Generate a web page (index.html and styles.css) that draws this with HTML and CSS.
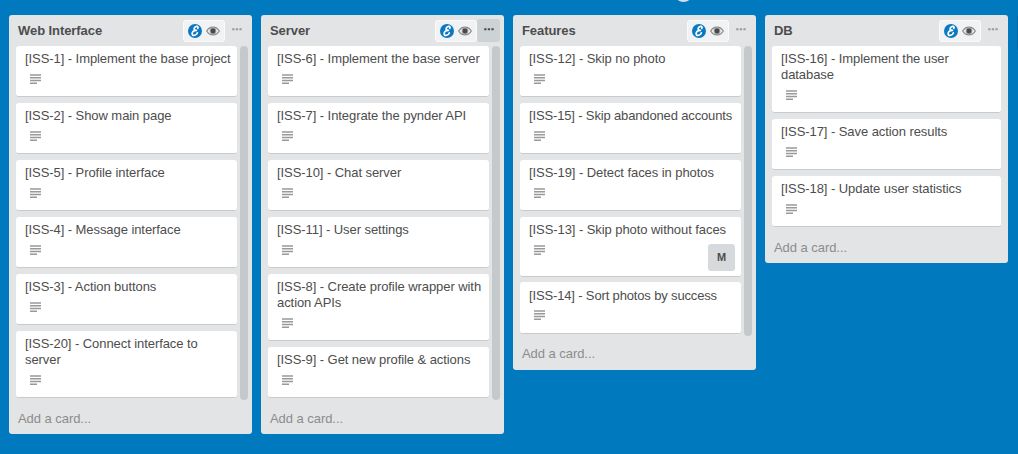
FILE: index.html
```
<!DOCTYPE html>
<html lang="en">
<head>
<meta charset="utf-8">
<title>Board</title>
<link rel="stylesheet" href="styles.css">
</head>
<body>
<svg class="defs" aria-hidden="true">
  <symbol id="logo" viewBox="0 0 14 14"><circle cx="7" cy="7" r="7" fill="#0b79c1"/><path d="M9.8 4.3C10.4 3 9.8 2.3 8.8 2.4C7 2.6 5.7 4.2 6.2 5.4C6.5 6.2 7.3 6.5 8.4 6.3C6 6.3 4.1 7.8 4.1 9.7C4.1 11.1 5.2 11.7 6.6 11.3C8 10.9 9 9.9 9.3 8.9" fill="none" stroke="#fff" stroke-width="1.7" stroke-linecap="round" stroke-linejoin="round"/></symbol>
  <symbol id="eye" viewBox="0 0 14 10"><path d="M.7 5C3.6-.2 10.4-.2 13.3 5C10.4 10.2 3.6 10.2 .7 5Z" fill="#f1f2f4" stroke="#8b8b8b" stroke-width="1.3"/><circle cx="7" cy="5" r="3.4" fill="#a0a0a0"/><circle cx="7" cy="5" r="2.4" fill="#484848"/></symbol>
  <symbol id="lines" viewBox="0 0 11 10"><path d="M0 1H11M0 3.7H11M0 6.5H11M0 9.2H7" stroke="#999" stroke-width="1.6"/></symbol>
  <symbol id="dots" viewBox="0 0 10 3"><path d="M.2 .3h2.3v2H.2zM3.8 .3h2.3v2H3.8zM7.4 .3h2.3v2H7.4z" fill="currentColor"/></symbol>
</svg>
<div class="top-dot"></div>
<main class="board" id="board"></main>
<div class="edge"></div>
<script src="board.js"></script>
</body>
</html>
```
FILE: styles.css
```
body { margin: 0; width: 1018px; height: 454px; overflow: hidden; position: relative; background: #0079bf; font-family: "Liberation Sans", Arial, sans-serif; color: #4d4d4d; }
.defs { position: absolute; width: 0; height: 0; }
.top-dot { position: absolute; left: 674px; top: -17px; width: 19px; height: 19px; border-radius: 50%; background: #d5dfe6; }
.edge { position: absolute; left: 1017px; top: 16px; width: 1px; height: 34px; background: #006aa8; }
.board { display: flex; align-items: flex-start; gap: 9px; padding: 15px 0 0 9px; }
.list { flex: none; width: 243px; background: #e2e4e6; border-radius: 3px; }
.header { display: flex; align-items: center; height: 31px; padding: 0 4px 0 9px; }
.title { flex: 1; margin: 0; font-size: 13px; line-height: 16px; font-weight: 700; letter-spacing: -0.07px; }
.tools { display: flex; align-items: center; justify-content: center; gap: 4px; box-sizing: border-box; width: 42px; height: 22px; border: 1px solid #fafbfb; border-radius: 3px; background: #f1f2f4; }
.logo { width: 14px; height: 14px; }
.eye { width: 14px; height: 10px; }
.more { box-sizing: border-box; width: 23px; height: 23px; padding: 9px 0 0 7px; border-radius: 3px; color: #999; }
.dots { display: block; width: 10px; height: 3px; }
.more.active { background: #cdd2d4; color: #4d4d4d; }
.body { display: flex; gap: 3px; padding: 0 4px 0 7px; }
.cards { flex: 1; display: flex; flex-direction: column; gap: 6px; padding-bottom: 2px; }
.scroll { width: 8px; border-radius: 4px; background: #c4c9cc; }
.list.short .body { padding-right: 7px; }
.card { box-sizing: border-box; min-height: 51px; padding: 5px 0 0 9px; display: flex; flex-direction: column; background: #fff; border-bottom: 1px solid #c8cacc; border-radius: 3px; }
.text { font-size: 13px; line-height: 16px; letter-spacing: -0.07px; white-space: pre; }
.text.tight { letter-spacing: -0.15px; }
.lines { width: 11px; height: 10px; margin: 7px 0 12px 5px; }
.member-card { height: 60px; margin-bottom: -1px; }
.member-card + .card { padding-top: 6px; }
.member-card + .card .lines { margin: 6px 0 13px 5px; }
.member { align-self: flex-end; margin: -23px 6px 0 0; width: 27px; height: 27px; border-radius: 3px; background: #d6dadc; font-size: 11px; line-height: 27px; font-weight: 700; text-align: center; }
.add { height: 34px; padding: 0 9px; font-size: 13px; line-height: 37px; color: #8c8c8c; letter-spacing: -0.05px; }
.with-member .add { line-height: 35px; }
```
FILE: board.js
```
const lists = [
  { title: "Web Interface", cards: ["[ISS-1] - Implement the base project", "[ISS-2] - Show main page", "[ISS-5] - Profile interface", "[ISS-4] - Message interface", "[ISS-3] - Action buttons", "[ISS-20] - Connect interface to\nserver"] },
  { title: "Server", active: true, cards: ["[ISS-6] - Implement the base server", "[ISS-7] - Integrate the pynder API", "[ISS-10] - Chat server", "[ISS-11] - User settings", "[ISS-8] - Create profile wrapper with\naction APIs", "[ISS-9] - Get new profile & actions"] },
  { title: "Features", member: 3, cards: ["[ISS-12] - Skip no photo", "[ISS-15] - Skip abandoned accounts", "[ISS-19] - Detect faces in photos", "[ISS-13] - Skip photo without faces", "[ISS-14] - Sort photos by success"] },
  { title: "DB", short: true, cards: ["[ISS-16] - Implement the user\ndatabase", "[ISS-17] - Save action results", "[ISS-18] - Update user statistics"] }
];
const tight = /ISS-1[45]\]/;
const escapeHtml = s => s.replace(/&/g, "&amp;");
document.getElementById("board").innerHTML = lists.map(l => `
<section class="list${l.short ? " short" : ""}${l.member ? " with-member" : ""}">
  <header class="header"><h2 class="title">${l.title}</h2>
    <div class="tools"><svg class="logo"><use href="#logo"/></svg><svg class="eye"><use href="#eye"/></svg></div>
    <div class="more${l.active ? " active" : ""}"><svg class="dots"><use href="#dots"/></svg></div></header>
  <div class="body"><div class="cards">${l.cards.map((c, i) => `
    <article class="card${i === l.member ? " member-card" : ""}"><div class="text${tight.test(c) ? " tight" : ""}">${escapeHtml(c)}</div><svg class="lines"><use href="#lines"/></svg>${i === l.member ? '<div class="member">M</div>' : ""}</article>`).join("")}
  </div>${l.short ? "" : '<div class="scroll"></div>'}</div>
  <div class="add">Add a card...</div>
</section>`).join("");
```
